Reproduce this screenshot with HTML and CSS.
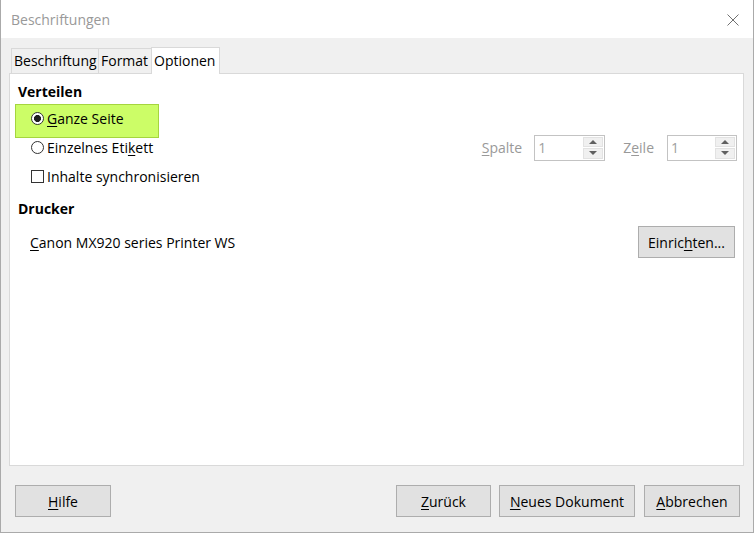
FILE: index.html
```html
<!DOCTYPE html>
<html lang="de">
<head>
<meta charset="utf-8">
<title>Beschriftungen</title>
<link rel="stylesheet" href="styles.css">
</head>
<body>
<div class="window">
  <div class="titlebar">
    <span class="title">Beschriftungen</span>
    <svg class="close" width="12" height="12" viewBox="0 0 12 12"><path d="M0.5 0.5 L11.5 11.5 M11.5 0.5 L0.5 11.5" stroke="#707070" stroke-width="1" fill="none"/></svg>
  </div>
  <div class="body">
    <div class="tabs">
      <div class="tab t1">Beschriftung</div>
      <div class="tab t2">Format</div>
      <div class="tab t3 active">Optionen</div>
    </div>
    <div class="panel">
      <div class="heading">Verteilen</div>
      <div class="row hl">
        <span class="radio checked"></span><span class="lbl"><u>G</u>anze Seite</span>
      </div>
      <div class="row">
        <span class="radio"></span><span class="lbl">Einzelnes Eti<u>k</u>ett</span>
        <div class="spins">
          <span class="dis"><u>S</u>palte</span>
          <div class="spin s1"><span class="val">1</span><span class="btns"><span class="sb"><i class="up"></i></span><span class="sb"><i class="down"></i></span></span></div>
          <span class="dis zl">Z<u>e</u>ile</span>
          <div class="spin s2"><span class="val">1</span><span class="btns"><span class="sb"><i class="up"></i></span><span class="sb"><i class="down"></i></span></span></div>
        </div>
      </div>
      <div class="row">
        <span class="check"></span><span class="lbl">Inhalte synchronisieren</span>
      </div>
      <div class="heading h2">Drucker</div>
      <div class="printer">
        <span><u>C</u>anon MX920 series Printer WS</span>
        <button class="btn setup">Einric<u>h</u>ten...</button>
      </div>
    </div>
    <div class="footer">
      <button class="btn help"><u>H</u>ilfe</button>
      <button class="btn back"><u>Z</u>urück</button>
      <button class="btn newdoc"><u>N</u>eues Dokument</button>
      <button class="btn cancel"><u>A</u>bbrechen</button>
    </div>
  </div>
</div>
</body>
</html>
```

FILE: styles.css
```css
html, body {
  margin: 0;
  padding: 0;
  background: #f0f0f0;
}
body {
  font-family: "Open Sans", "Noto Sans", sans-serif;
  font-size: 14px;
  color: #000;
}
u {
  text-decoration: underline;
  text-underline-offset: 2px;
}
.window {
  width: 754px;
  height: 533px;
  box-sizing: border-box;
  border: 1px solid #aaaaaa;
  border-top: none;
  display: flex;
  flex-direction: column;
  background: #f0f0f0;
}
.titlebar {
  height: 38px;
  flex: none;
  background: #fff;
  display: flex;
  align-items: center;
  justify-content: space-between;
  padding: 0 14px 0 10px;
  color: #999999;
}
.title {
  line-height: 20px;
  margin-top: 1px;
}
.close {
  display: block;
  margin-top: 1px;
}
.body {
  flex: 1;
  display: flex;
  flex-direction: column;
  padding: 9px 9px 15px 8px;
  min-height: 0;
}
.tabs {
  display: flex;
  align-items: flex-end;
  height: 26px;
  margin-left: 2px;
  flex: none;
}
.tab {
  box-sizing: border-box;
  height: 25px;
  border: 1px solid #d9d9d9;
  border-bottom: none;
  background: #f0f0f0;
  padding-left: 2px;
  line-height: 23px;
  white-space: nowrap;
  margin-right: -1px;
}
.t1 { width: 88px; }
.t2 { width: 54px; }
.t3 { width: 69px; }
.tab.active {
  height: 27px;
  background: #fff;
  margin-bottom: -1px;
  position: relative;
  z-index: 1;
  line-height: 25px;
}
.panel {
  flex: 1;
  background: #fff;
  border: 1px solid #d9d9d9;
  padding: 8px 6px 0 0;
  display: flex;
  flex-direction: column;
}
.heading {
  font-weight: bold;
  line-height: 20px;
  margin-left: 8px;
}
.heading.h2 {
  margin-top: 8px;
}
.row {
  height: 29px;
  display: flex;
  align-items: center;
  padding-left: 21px;
  position: relative;
}
.heading + .row {
  margin-top: 2px;
}
.row.hl::before {
  content: "";
  position: absolute;
  left: 5px;
  top: 0;
  width: 142px;
  height: 32px;
  background: #ccfd67;
  border: 1px solid #a5d53f;
}
.row > * {
  position: relative;
}
.lbl {
  margin-left: 3px;
  line-height: 20px;
}
.radio {
  width: 13px;
  height: 13px;
  box-sizing: border-box;
  border: 1px solid #333;
  border-radius: 50%;
  background: #fff;
  flex: none;
}
.radio.checked {
  background: radial-gradient(circle, #1e1e1e 0, #1e1e1e 3.2px, #fff 3.8px);
}
.check {
  width: 13px;
  height: 13px;
  box-sizing: border-box;
  border: 1px solid #333;
  background: #fff;
  flex: none;
}
.spins {
  margin-left: auto;
  display: flex;
  align-items: center;
}
.dis {
  color: #999999;
  margin-right: 12px;
}
.dis.zl {
  margin-left: 18px;
  margin-right: 13px;
}
.spin {
  height: 26px;
  box-sizing: border-box;
  border: 1px solid #c3c3c3;
  background: #fff;
  display: flex;
}
.s1 { width: 71px; }
.s2 { width: 70px; }
.val {
  flex: 1;
  color: #a0a0a0;
  padding-left: 3px;
  line-height: 24px;
}
.btns {
  width: 20px;
  margin: 1px 1px 1px 0;
  display: flex;
  flex-direction: column;
  gap: 1px;
}
.sb {
  flex: 1;
  box-sizing: border-box;
  background: #f0f0f0;
  border: 1px solid #e2e2e2;
  display: flex;
  align-items: center;
  justify-content: center;
}
.up, .down {
  width: 0;
  height: 0;
  border-left: 4px solid transparent;
  border-right: 4px solid transparent;
}
.up { border-bottom: 4px solid #606060; }
.down { border-top: 4px solid #606060; }
.printer {
  margin-top: 7px;
  height: 32px;
  display: flex;
  align-items: center;
  justify-content: space-between;
  padding-left: 20px;
  padding-right: 2px;
}
.btn {
  font-family: "Open Sans", "Noto Sans", sans-serif;
  font-size: 14px;
  color: #000;
  height: 32px;
  box-sizing: border-box;
  background: #e1e1e1;
  border: 1px solid #adadad;
  border-radius: 0;
  padding: 0;
  margin: 0;
  text-align: center;
}
.setup { width: 97px; }
.footer {
  flex: none;
  display: flex;
  margin-top: 19px;
  padding-left: 6px;
  padding-right: 4px;
}
.help { width: 96px; margin-right: auto; }
.back { width: 95px; }
.newdoc { width: 136px; margin-left: 8px; }
.cancel { width: 96px; margin-left: 9px; }
```
